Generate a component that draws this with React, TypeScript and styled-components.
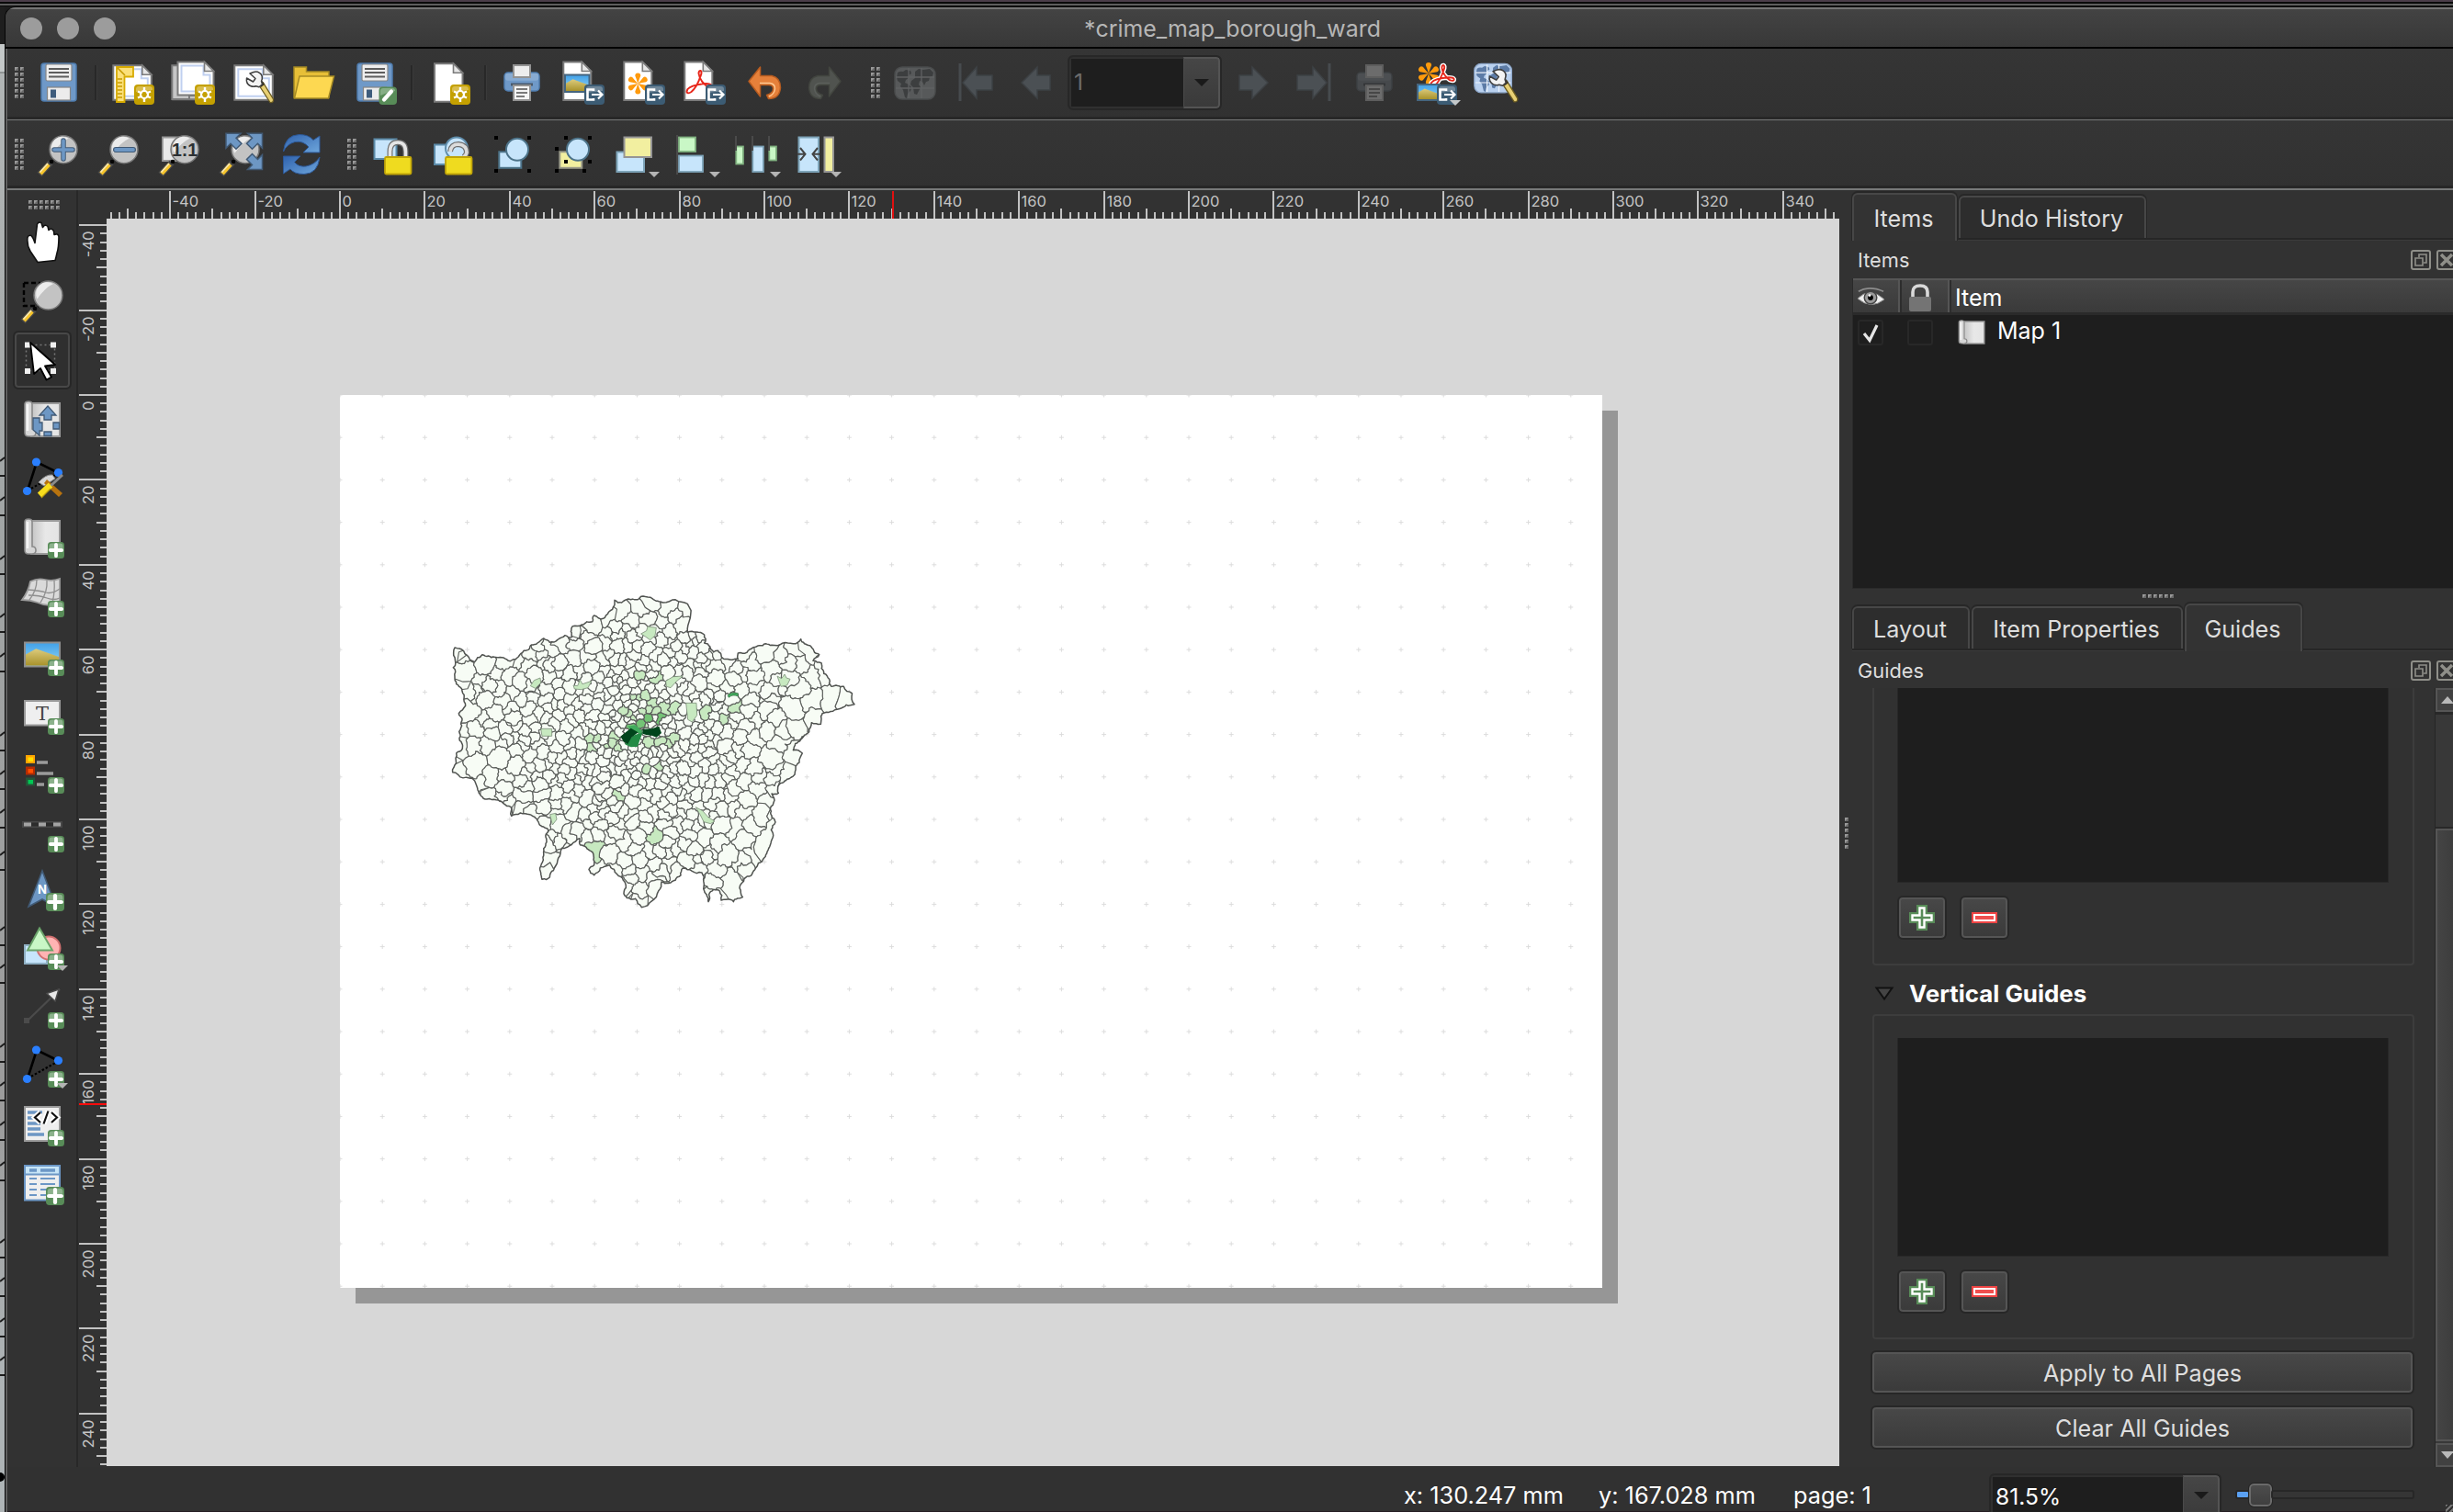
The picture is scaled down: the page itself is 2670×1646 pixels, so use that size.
import React from "react";
import styled, { createGlobalStyle } from "styled-components";

const FONT = `Inter, Roboto, "Liberation Sans", sans-serif`;

const GlobalStyle = createGlobalStyle`
  * { box-sizing: border-box; }
  html, body { margin: 0; padding: 0; background: #323232; overflow: hidden; }
  body { font-family: ${FONT}; font-size: 25px; color: #dedede; }
`;

/* ---------- shell ---------- */

const Screen = styled.div`
  width: 2670px;
  height: 1646px;
  display: flex;
  flex-direction: column;
  overflow: hidden;
  background: #1c1c1c;
`;
const MenuEdge = styled.div`
  height: 7px;
  flex: none;
  background: linear-gradient(#4a3d49 0 2px, #0a0a0a 2px 4px, #5d5d5d 4px 6px, #0a0a0a 6px 7px);
`;
const Desktop = styled.div`
  flex: 1;
  min-height: 0;
  display: flex;
`;
const BackWindow = styled.div`
  width: 5px;
  flex: none;
  background: linear-gradient(#1e1e1e 0 41px, #c4c8c8 41px 71px, #8f9393 71px 73px, #b0b4b4 73px 160px, #a2a6a6 500px, #9c9c9c 1200px, #aeb4b6 1500px);
`;
const Window = styled.div`
  flex: 1;
  min-width: 0;
  display: flex;
  flex-direction: column;
  background: #323232;
  border-left: 1px solid #050505;
  border-radius: 12px 0 0 0;
  overflow: hidden;
  border-top: 1px solid #101010;
`;
const TitleBar = styled.div`
  height: 45px;
  flex: none;
  display: grid;
  grid-template-columns: 1fr auto 1fr;
  align-items: center;
  padding: 0 9px 0 16px;
  border-top: 2px solid #757575;
  border-bottom: 2px solid #020202;
  background: linear-gradient(#434343, #383838);
`;
const Lights = styled.div`
  display: flex;
  gap: 16px;
`;
const Light = styled.span`
  width: 24px;
  height: 24px;
  border-radius: 50%;
  background: #9c9c9c;
`;
const Title = styled.h1`
  margin: 0;
  font-size: 24.9px;
  font-weight: 400;
  line-height: 36px;
  color: #b6b6b6;
  white-space: nowrap;
`;
const Frame = styled.div`
  flex: 1;
  min-height: 0;
  display: flex;
  flex-direction: column;
  border-left: 2px solid #5e5e5e;
`;
const ToolRow = styled.div<{ $line: number; $height: number; $lift?: number }>`
  height: ${(p) => p.$height}px;
  flex: none;
  display: flex;
  align-items: center;
  padding: 0 0 ${(p) => p.$lift ?? 0}px 8px;
  border-bottom: ${(p) => p.$line}px solid #777979;
  box-shadow: inset 0 -3px 0 #272727;
  background: linear-gradient(#353535, #313131);
`;

const GripBox = styled.span<{ $cols: number; $pre: number; $post: number }>`
  display: grid;
  flex: none;
  grid-template-columns: repeat(${(p) => p.$cols}, 4px);
  grid-auto-rows: 4px;
  gap: 2px;
  margin-left: ${(p) => p.$pre}px;
  margin-right: ${(p) => p.$post}px;
`;
const GripDot = styled.i`
  background: linear-gradient(135deg, #9a9a9a 45%, #6a6a6a 55%);
`;
function Grip({ cols, rows, pre = 0, post = 0 }: { cols: number; rows: number; pre?: number; post?: number }) {
  return (
    <GripBox $cols={cols} $pre={pre} $post={post}>
      {Array.from({ length: cols * rows }, (_, i) => (
        <GripDot key={i} />
      ))}
    </GripBox>
  );
}

const Tool = styled.button<{ $w?: number; $h?: number; $active?: boolean }>`
  width: ${(p) => p.$w ?? 66}px;
  height: ${(p) => p.$h ?? 66}px;
  flex: none;
  padding: 0;
  display: flex;
  align-items: center;
  justify-content: center;
  border-radius: 6px;
  border: ${(p) => (p.$active ? "2px solid #272727" : "none")};
  box-shadow: ${(p) => (p.$active ? "inset 0 0 0 2px #484848" : "none")};
  background: ${(p) => (p.$active ? "#2f2f2f" : "transparent")};
`;
const ToolSep = styled.span`
  width: 14px;
  height: 38px;
  flex: none;
  display: flex;
  justify-content: center;
  &::before {
    content: "";
    width: 3px;
    background: linear-gradient(90deg, #282828 0 2px, #3a3a3a 2px);
  }
`;
const Glyph = styled.svg`
  width: 48px;
  height: 48px;
  overflow: visible;
  display: block;
`;

/* ---------- icons ---------- */

const BLUE = "#6d97c4";
const BLUE_D = "#415a75";

const DefsSvg = styled.svg`
  position: absolute;
`;
const Defs = () => (
  <DefsSvg width="0" height="0">
    <defs>
      <linearGradient id="sky" x1="0" y1="0" x2="0" y2="1">
        <stop offset="0" stopColor="#3fa0e8" />
        <stop offset="1" stopColor="#9ad8f5" />
      </linearGradient>
      <linearGradient id="sand" x1="0" y1="0" x2="0" y2="1">
        <stop offset="0" stopColor="#dccb7c" />
        <stop offset="1" stopColor="#a8922c" />
      </linearGradient>
      <linearGradient id="roll" x1="0" y1="0" x2="1" y2="0">
        <stop offset="0" stopColor="#c4c4c4" />
        <stop offset="0.5" stopColor="#e8e8e8" />
        <stop offset="1" stopColor="#e4e4e4" />
      </linearGradient>
      <linearGradient id="sync" x1="0" y1="0" x2="1" y2="1">
        <stop offset="0" stopColor="#2f62ad" />
        <stop offset="1" stopColor="#6ea6dc" />
      </linearGradient>
    </defs>
  </DefsSvg>
);

const StarBadge = () => (
  <g>
    <rect x="26" y="26" width="22" height="22" rx="4" fill="#c4a000" />
    <path d="M28 34v-3a3 3 0 0 1 3-3h12a3 3 0 0 1 3 3v1q-8 1-18 2z" fill="#d9bd4c" />
    <path d="M37 29v5M37 40v5M30 33.500l4.500 2M39.500 38.500l4.500 2M44 33.500l-4.500 2M34.500 38.500l-4.500 2" stroke="#fff" strokeWidth="2.400" />
    <circle cx="37" cy="37" r="4" fill="none" stroke="#fff" strokeWidth="2.200" />
  </g>
);
const ExportBadge = () => (
  <g>
    <rect x="26" y="26" width="22" height="22" rx="4" fill="#3c5c74" />
    <path d="M28 35v-4a3 3 0 0 1 3-3h12a3 3 0 0 1 3 3v2q-8 1-18 2z" fill="#71889a" />
    <path d="M36 33v-1.500h-6.500v11H36V41" fill="none" stroke="#fff" strokeWidth="2.600" />
    <path d="M34 37h11M41 32.500l4.500 4.500-4.500 4.500" fill="none" stroke="#fff" strokeWidth="2.200" />
  </g>
);
const PlusBadge = ({ s = 18 }: { s?: number }) => (
  <g transform={`translate(${48 - s} ${48 - s}) scale(${s / 18})`}>
    <rect width="18" height="18" rx="3.500" fill="#588c58" />
    <path d="M1.500 9V4.500a3 3 0 0 1 3-3h9a3 3 0 0 1 3 3V7q-8 0-15 2z" fill="#8cb28c" />
    <path d="M9 2.800v12.400M2.800 9h12.400" stroke="#fff" strokeWidth="3.800" strokeLinecap="round" />
  </g>
);
const MenuArrow = () => <path d="M40 43h12l-6 6z" fill="#b4b4b4" />;

const Sheet = ({ x, y, w, h, f = 10, inner }: { x: number; y: number; w: number; h: number; f?: number; inner?: boolean }) => (
  <g>
    <path d={`M${x} ${y}h${w - f}l${f} ${f}v${h - f}h${-w}z`} fill="#fff" stroke="#7b7b7b" strokeWidth="2" />
    {inner && <path d={`M${x + 4} ${y + 4}h${w - f - 5}v${f}h${f - 3}v${h - f - 8}h${-(w - 8)}z`} fill="none" stroke="#c0d0f0" strokeWidth="2" />}
    <path d={`M${x + w - f} ${y}v${f}h${f}z`} fill="#e6e6e6" stroke="#7b7b7b" strokeWidth="1.600" />
  </g>
);

const SaveBase = () => (
  <g>
    <rect x="5" y="3" width="38" height="41" rx="3" fill="#6f99c8" stroke="#4f7cae" strokeWidth="1.500" />
    <rect x="10" y="4" width="28" height="18" rx="1.500" fill="#eeeeee" stroke="#858585" strokeWidth="1.200" />
    <path d="M13 9h22M13 13h22M13 17.500h22" stroke="#5e5e5e" strokeWidth="1.800" />
    <rect x="11.500" y="29" width="25" height="14" fill="#ececec" stroke="#858585" strokeWidth="1.200" />
    <rect x="15" y="31.500" width="6" height="9" fill="#3e5c7c" />
  </g>
);

const Wrench = () => (
  <g>
    <path d="M30 27l4.500-3L45.500 42q.5 4-3.500 3.500z" fill="#e7cf73" stroke="#6b5c22" strokeWidth="1.300" />
    <path d="M29.500 25l4-3 2.500 4-4 3z" fill="#3a3425" />
    <path d="M24 12.500l-4 1.500 6 5.500-2.500 3.500-7-4q-1 6 4 8.500 3.500 1.500 6 .3l3.500 1 3.500-3-1-3.500q2.500-6-2-9-3-2-6.500-.8z" fill="#f3f3f3" stroke="#3f3f3f" strokeWidth="1.500" strokeLinejoin="round" />
  </g>
);
const Lens = ({ cx = 29, cy = 18.7, r = 15 }: { cx?: number; cy?: number; r?: number }) => (
  <g>
    <path d="M3 46L15 33" stroke="#4a4a4a" strokeWidth="7" />
    <path d="M4 45L13 35" stroke="#f7c52c" strokeWidth="4.500" />
    <path d="M3.500 43.500L12 34" stroke="#f6e9b8" strokeWidth="1.600" />
    <circle cx="16" cy="32" r="2.300" fill="#050505" />
    <circle cx={cx} cy={cy} r={r} fill="#c3c3c3" stroke="#777" strokeWidth="1.500" />
    <path d={`M${cx - r + 3.5} ${cy + 4}a${r - 3} ${r - 3} 0 0 1 ${r + 2} -${r + 1}q-9 4-${r + 2} ${r + 1}z`} fill="#ececec" />
  </g>
);
const Picture = ({ x, y, w, h, edge }: { x: number; y: number; w: number; h: number; edge: string }) => (
  <g>
    <rect x={x} y={y} width={w} height={h} fill="url(#sky)" stroke={edge} strokeWidth="2" />
    <path d={`M${x + 1} ${y + h * 0.5}L${x + w * 0.32} ${y + h * 0.26}L${x + w - 1} ${y + h * 0.6}V${y + h - 1}H${x + 1}z`} fill="url(#sand)" />
  </g>
);
const Padlock = ({ open }: { open?: boolean }) => (
  <g>
    {open ? (
      <>
        <path d="M22 21q1-8 9-8 9 1 9 9-1 4-4 5" fill="none" stroke="#6f6f6f" strokeWidth="6" />
        <path d="M22 21q1-8 9-8 9 1 9 9-1 4-4 5" fill="none" stroke="#dcdcdc" strokeWidth="3.600" />
      </>
    ) : (
      <>
        <path d="M22.500 27v-6q0-10 8.500-10t8.500 10v6" fill="none" stroke="#6f6f6f" strokeWidth="6" />
        <path d="M22.500 27v-6q0-10 8.500-10t8.500 10v6" fill="none" stroke="#e6e6e6" strokeWidth="3.600" />
      </>
    )}
    <rect x="17" y="27" width="28.500" height="18.500" rx="1.500" fill="#efdb1f" stroke="#bfa308" strokeWidth="1.800" />
  </g>
);
const World = ({ dim }: { dim?: boolean }) => (
  <g>
    <rect x="2" y="7" width="44" height="35" rx="8" fill={dim ? "#57595a" : "#b9d0ee"} stroke={dim ? "#4a4c4d" : "#8fa9cc"} strokeWidth="1.500" />
    <path d="M5 13q3-2 6-1l3-2 5 1 1 3-3 2 1 2-4 3-1 3 4 2 3 3-1 4-3 3-1 5-2-1-2-8-3-4 1-3-4-3-1-4zM24 12l4-3 5 1 7-1 4 4-1 4-3 1-1 4-3 1-2 4-2-4-3-1-1 4 2 3-2 4-2 4-3-1-1-7-3-3 1-4 4-3z" fill={dim ? "#3c3e3f" : "#5c7ba6"} />
    <path d="M17 8v33M31 8v33M3 18h42M3 30h42" stroke={dim ? "#606263" : "#eef4fb"} strokeWidth="1.300" />
  </g>
);
const Printer = ({ dim }: { dim?: boolean }) => (
  <g>
    <rect x="5" y="13" width="38" height="20" rx="4" fill={dim ? "#46494c" : "#6f99c8"} stroke={dim ? "#3d4043" : "#4f7cae"} strokeWidth="1.500" />
    <rect x="5.800" y="13.800" width="36.400" height="8" rx="3" fill={dim ? "#4c4f52" : "#88abd2"} />
    <rect x="15" y="5" width="18" height="13" fill={dim ? "#6c6c6c" : "#ededed"} stroke={dim ? "#5d5d5d" : "#939393"} strokeWidth="2" />
    <path d="M12 26h24" stroke={dim ? "#343638" : "#4a5a6c"} strokeWidth="3" />
    <rect x="15" y="27" width="18" height="16" fill={dim ? "#6c6c6c" : "#f5f5f5"} stroke={dim ? "#5d5d5d" : "#939393"} strokeWidth="2" />
    <path d="M18 31h12M18 35h12M18 39h9" stroke={dim ? "#474747" : "#7a7a7a"} strokeWidth="1.800" />
  </g>
);
const Flower = ({ cx, cy, k = 1 }: { cx: number; cy: number; k?: number }) => (
  <g transform={`translate(${cx} ${cy}) scale(${k})`}>
    {[0, 60, 120, 180, 240, 300].map((a) => (
      <path key={a} transform={`rotate(${a})`} d="M0 0Q-1.500-5-3-8.500a3 3 0 1 1 6 0Q1.500-5 0 0z" fill="#ff9a0c" />
    ))}
  </g>
);
const ACROBAT_PATH = "M0 24q-2 0 0-4 4-5 20-6 5 0 6 2 0 3-5 1-8-6-9-14 0-3 2-3 2 1 0 6Q10 18 4 23q-3 2-4 1z";
const Acrobat = () => <path d={ACROBAT_PATH} fill="none" stroke="#e8281c" strokeWidth="2" strokeLinejoin="round" />;
const Nodes = () => (
  <g>
    <path d="M8 38L18 7 42 19" fill="none" stroke="#000" strokeWidth="2.600" />
    <path d="M8 38L42 19" stroke="#000" strokeWidth="2.200" strokeDasharray="2.500 2" />
    <circle cx="17.500" cy="7" r="4.600" fill="#2a7fff" />
    <circle cx="41.500" cy="18.500" r="4.600" fill="#2a7fff" />
    <circle cx="7.500" cy="38.500" r="4.600" fill="#2a7fff" />
  </g>
);
const Roll = () => (
  <g>
    <path d="M12 7h31v36H12z" fill="url(#roll)" stroke="#9a9a9a" strokeWidth="2" />
    <path d="M5 8q0-3 4-3t4 3v27q4 0 4 4t-4 4H9q-4 0-4-4z" fill="#d6d6d6" stroke="#8a8a8a" strokeWidth="1.600" />
    <path d="M8 8v29" stroke="#f4f4f4" strokeWidth="2.500" />
  </g>
);
const NavArrow = ({ flip, bar }: { flip?: boolean; bar?: boolean }) => (
  <g transform={flip ? "matrix(-1 0 0 1 48 0)" : undefined}>
    {bar && <path d="M7 3v41" stroke="#474b4e" strokeWidth="3" />}
    <path d={bar ? "M10 24L25 7v9h17v16H25v9z" : "M8 24L25 7v9h14v16H25v9z"} fill="#4b5054" stroke="#3d4144" strokeWidth="1.500" />
  </g>
);
const UndoShape = ({ c, d, hi }: { c: string; d: string; hi: string }) => (
  <g>
    <path d="M7 22.500L19.500 7v9.500H32q9.500 2 9.500 13-1 12-13 12l-2-4q7-2 7-7 0-4-5-4h-9V39z" fill={c} stroke={d} strokeWidth="1.500" strokeLinejoin="round" />
    <path d="M19 24.500h11q6 1 5.500 6.500-1 6-6.500 8" fill="none" stroke={hi} strokeWidth="1.400" />
  </g>
);

const icons: Record<string, React.ReactNode> = {
  save: <SaveBase />,
  newLayout: (
    <>
      <Sheet x={3.3} y={5.3} w={41.5} h={37.5} inner />
      <path d="M7 7h18v10.500H15.500V45H7z" fill="#fbe07a" stroke="#d8ab00" strokeWidth="1.800" />
      <path d="M8 8l8 8M8 20h5M8 24h5M8 28h5M8 32h5M8 36h5M8 40h5" stroke="#c79a00" strokeWidth="1.600" />
      <StarBadge />
    </>
  ),
  duplicate: (
    <>
      <path d="M1.300 5.300H20V42H1.300z M20 38h10v4.300H1.300" fill="#c6c6c6" stroke="#7b7b7b" strokeWidth="2" />
      <Sheet x={7.5} y={1.5} w={39} h={36} inner />
      <StarBadge />
    </>
  ),
  manager: (
    <>
      <Sheet x={3.3} y={5.3} w={41.5} h={37.5} inner />
      <Wrench />
    </>
  ),
  folder: (
    <>
      <path d="M2 7h13.500v5H40v28H2z" fill="#e7bf37" stroke="#a58a24" strokeWidth="1.500" />
      <path d="M8 17h37.500l-6 24H2.500z" fill="#fdd851" stroke="#a58a24" strokeWidth="1.500" />
    </>
  ),
  saveAs: (
    <>
      <SaveBase />
      <rect x="28.500" y="28.500" width="19.500" height="19.500" rx="4" fill="#588c58" />
      <path d="M30 38v-5a3 3 0 0 1 3-3h10a3 3 0 0 1 3 3q-8 1-16 5z" fill="#86ae86" />
      <path d="M34 42.500l8-9" stroke="#fff" strokeWidth="4.200" strokeLinecap="round" />
    </>
  ),
  newPage: (
    <>
      <Sheet x={9} y={3.3} w={30.5} h={41.5} />
      <StarBadge />
    </>
  ),
  print: <Printer />,
  exportImage: (
    <>
      <Sheet x={3.3} y={1.5} w={30} h={41.5} />
      <Picture x={5} y={15.5} w={26.5} h={18.5} edge="#45657f" />
      <ExportBadge />
    </>
  ),
  exportSvg: (
    <>
      <Sheet x={3.3} y={1.5} w={30} h={41.5} />
      <Flower cx={18.3} cy={25} />
      <ExportBadge />
    </>
  ),
  exportPdf: (
    <>
      <Sheet x={3.3} y={1.5} w={30} h={41.5} />
      <g transform="translate(6.500 11)">
        <Acrobat />
      </g>
      <ExportBadge />
    </>
  ),
  undo: <UndoShape c="#e5803a" d="#b85c20" hi="#ffc993" />,
  redo: (
    <g transform="matrix(-1 0 0 1 48 0)">
      <UndoShape c="#50534f" d="#42453f" hi="#5b5f5b" />
    </g>
  ),
  atlas: <World dim />,
  first: <NavArrow bar />,
  prev: <NavArrow />,
  next: <NavArrow flip />,
  last: <NavArrow flip bar />,
  printDim: <Printer dim />,
  exportAtlas: (
    <>
      <Flower cx={17} cy={14} k={1.05} />
      <g transform="translate(20 5) scale(.95)">
        <path d={ACROBAT_PATH} fill="none" stroke="#fff" strokeWidth="5" />
        <Acrobat />
      </g>
      <Picture x={5} y={26} w={24} h={17} edge="#45657f" />
      <ExportBadge />
      <path d="M40 43h12l-6 6z" fill="#c4c8ca" />
    </>
  ),
  atlasSettings: (
    <>
      <g transform="translate(-1 -3) scale(.92 .9)">
        <World />
      </g>
      <g transform="translate(0 -3) scale(1.050)">
        <Wrench />
      </g>
    </>
  ),
  zoomIn: (
    <>
      <Lens />
      <path d="M29 9v20M19 19h20" stroke={BLUE_D} strokeWidth="5.500" strokeLinecap="round" />
      <path d="M29 9v20M19 19h20" stroke={BLUE} strokeWidth="3.600" strokeLinecap="round" />
    </>
  ),
  zoomOut: (
    <>
      <Lens />
      <path d="M20 19h19" stroke={BLUE_D} strokeWidth="6" strokeLinecap="round" />
      <path d="M20 19h19" stroke={BLUE} strokeWidth="3.800" strokeLinecap="round" />
    </>
  ),
  zoomActual: (
    <>
      <path d="M5 5.500h20v25.500H5z" fill="#e9e9e9" stroke="#9a9a9a" strokeWidth="1.800" />
      <Lens />
      <text x="29" y="26" textAnchor="middle" fontFamily="Liberation Sans, sans-serif" fontWeight="700" fontSize="19.500" fill="#2b2f33">
        1:1
      </text>
    </>
  ),
  zoomFull: (
    <>
      <Lens />
      <g fill={BLUE} stroke={BLUE_D} strokeWidth="1.500">
        <path d="M8 1.300h16l-5 5 6 6-6 6-6-6-5 5z" />
        <path d="M47.500 1.300h-16l5 5-6 6 6 6 6-6 5 5z" />
        <path d="M47.500 40.500h-16l5-5-6-6 6-6 6 6 5-5z" />
      </g>
    </>
  ),
  refresh: (
    <g fill="url(#sync)" stroke="#2c5796" strokeWidth="1">
      <path d="M4.500 21Q6 3 22 2.500q10 0 15 6l7-4.500v18H26l6-6Q26 9 17 10.500 8 13 4.500 21z" />
      <path d="M44 27Q42 45 27 45.500q-11 0-15-5.500l-7.500 5V26H23l-6.500 6.500Q21 38 29 37q10-2 15-10z" />
    </g>
  ),
  lock: (
    <>
      <rect x="5.500" y="7.500" width="24" height="21.500" fill="#c7e5fb" stroke="#5b8aa8" strokeWidth="2" />
      <Padlock />
    </>
  ),
  unlock: (
    <>
      <rect x="5" y="13.500" width="22" height="21.500" fill="#c7e5fb" stroke="#5b8aa8" strokeWidth="2" />
      <circle cx="29" cy="17.500" r="12" fill="#c7e5fb" stroke="#5f8dab" strokeWidth="2" />
      <Padlock open />
    </>
  ),
  group: (
    <>
      <rect x="9.300" y="21.300" width="24" height="17.500" fill="#c7e5fb" stroke="#4d7389" strokeWidth="2" />
      <circle cx="29" cy="18.800" r="12" fill="#c7e5fb" stroke="#4d7389" strokeWidth="2" />
      <path d="M4 4h4v4H4zM40 4h4v4h-4zM4 40h4v4H4zM40 40h4v4h-4z" />
    </>
  ),
  ungroup: (
    <>
      <rect x="9.300" y="21.300" width="24" height="17.500" fill="#f2efa0" stroke="#9a9a88" strokeWidth="2" />
      <circle cx="29" cy="18.800" r="12" fill="#c7e5fb" stroke="#4d7389" strokeWidth="2" />
      <path d="M14 4h4v4h-4zM40 4h4v4h-4zM4 16h4v4H4zM14 30h4v4h-4zM40 30h4v4h-4zM4 40h4v4H4zM34 40h4v4h-4z" />
    </>
  ),
  raise: (
    <>
      <rect x="5.500" y="21.500" width="29.500" height="21.500" fill="#c7e5fb" stroke="#7da3b8" strokeWidth="2" />
      <rect x="13.500" y="5.500" width="29.500" height="21.500" fill="#f2efa0" stroke="#959595" strokeWidth="2" />
      <MenuArrow />
    </>
  ),
  align: (
    <>
      <path d="M5 3v43" stroke="#4a4a4a" strokeWidth="2" />
      <rect x="7" y="5.500" width="18" height="15.500" fill="#c9f7c6" stroke="#82b482" strokeWidth="1.800" />
      <rect x="7" y="25.500" width="26" height="17.500" fill="#c7e5fb" stroke="#7da3b8" strokeWidth="1.800" />
      <MenuArrow />
    </>
  ),
  distribute: (
    <>
      <path d="M3 4v17M21 4v17M39 4v17" stroke="#4a4a4a" strokeWidth="2" />
      <rect x="3.300" y="15.500" width="7.600" height="19" fill="#c9f7c6" stroke="#82b482" strokeWidth="1.800" />
      <rect x="21.300" y="15.500" width="11.600" height="27.500" fill="#c7e5fb" stroke="#7da3b8" strokeWidth="1.800" />
      <rect x="39.300" y="15.500" width="7.600" height="15" fill="#c9f7c6" stroke="#82b482" strokeWidth="1.800" />
      <path d="M3 14v6M21 14v6M39 14v6" stroke="#4a4a4a" strokeWidth="2" />
      <MenuArrow />
    </>
  ),
  resize: (
    <>
      <rect x="5.500" y="5.500" width="21.500" height="37.500" fill="#c7e5fb" stroke="#7da3b8" strokeWidth="2" />
      <rect x="33.500" y="5.500" width="9.500" height="37.500" fill="#f2efa0" stroke="#959595" strokeWidth="2" />
      <path d="M4 23.800h8M7 17l5.500 6.800L7 30.500M28 23.800h-8M26 17l-5.500 6.800L26 30.500" fill="none" stroke="#444" strokeWidth="2" />
      <MenuArrow />
    </>
  ),
  pan: (
    <path
      d="M17 45L9 33Q5 26 6 18q1-3 4-2 2 2 4 8L16.500 3.500Q18 .5 21 2l1.500 5Q25 3 28 6l1 4q3-3 5.500 1l.5 4q4-2 5 2 0 12-2 18-1 5-2 8z"
      transform="translate(2 .5)"
      fill="#fff"
      stroke="#111"
      strokeWidth="1.600"
      strokeLinejoin="round"
    />
  ),
  zoom: (
    <>
      <path d="M4 4h18M4 4v25h22" fill="none" stroke="#000" strokeWidth="2.400" strokeDasharray="5 3" />
      <Lens cx={30.5} cy={17.5} r={15.5} />
    </>
  ),
  select: (
    <>
      <path d="M6.500 7.500h31v28h-31z" fill="none" stroke="#777" strokeWidth="1.500" strokeDasharray="2 3" />
      <path d="M5 4.500h6v6H5zM33 4.500h6v6h-6zM5 33h6v6H5zM33 33h6v6h-6z" fill="#efefef" />
      <path d="M11 5l27 24-11 1.500 7 12-5.500 3L22 33l-7 6z" fill="#fff" stroke="#000" strokeWidth="1.800" strokeLinejoin="round" />
    </>
  ),
  moveContent: (
    <>
      <Roll />
      <g fill={BLUE} stroke={BLUE_D} strokeWidth="1.300">
        <path d="M30 10l9 10h-5v5h-8v-5h-5z" />
        <path d="M14 23l7 0v5h3v9h-3v5l-7-6z" />
        <path d="M36 28h6.500v7H36zM26 38h8v4.500h-8z" />
      </g>
    </>
  ),
  editNodes: (
    <>
      <Nodes />
      <path d="M20 29q8-9 15-8l3 4-12 8z" fill="#d6d6d6" stroke="#8d8d8d" />
      <path d="M29 26l17 15-4 4-16-15z" fill="#b8730f" />
      <path d="M46 21L33 33" stroke="#8a8a8a" strokeWidth="3" />
      <path d="M33 32L21 43" stroke="#f7dd1d" strokeWidth="6.500" />
      <path d="M33 36L23 46" stroke="#b59a10" strokeWidth="1.200" />
    </>
  ),
  addMap: (
    <>
      <Roll />
      <PlusBadge />
    </>
  ),
  add3d: (
    <>
      <path d="M2 29Q9 20 11 9q8-4 16-2 8 2 16-1v27q-14 4-24-1-8-3-17-3z" fill="#dadada" stroke="#9c9c9c" strokeWidth="1.800" />
      <path d="M8 18q14 1 20 3t15-4M18 7q0 12-8 22M29 8q1 12-7 24M9 24q12 0 20 3t14 0M37 8q1 12-2 24" fill="none" stroke="#8f8f8f" strokeWidth="1.300" />
      <PlusBadge />
    </>
  ),
  addPicture: (
    <>
      <Picture x={5} y={11.5} w={38} h={26} edge="#8e8e8e" />
      <PlusBadge />
    </>
  ),
  addLabel: (
    <>
      <rect x="5" y="11" width="38" height="26.500" fill="#efefef" stroke="#9a9a9a" strokeWidth="2" />
      <text x="24" y="31.500" textAnchor="middle" fontFamily="DejaVu Serif, Liberation Serif, serif" fontSize="21" fill="#444">
        T
      </text>
      <PlusBadge />
    </>
  ),
  addLegend: (
    <>
      <path d="M6 6h10v9H6z" fill="#ffa500" />
      <path d="M8.500 8.500h5.500v4.500H8.500z" fill="#ffdf00" />
      <path d="M6 18.500h10v9H6z" fill="#b32b00" />
      <path d="M8.500 21h5.500v4.500H8.500z" fill="#ff4e00" />
      <path d="M6 30.500h10v9H6z" fill="#245438" />
      <path d="M8.500 33h5.500v4.500H8.500z" fill="#00c853" />
      <path d="M18 14h12M18 26h18M18 38h8" stroke="#9b9b9b" strokeWidth="3.600" />
      <PlusBadge />
    </>
  ),
  addScale: (
    <>
      <path d="M2 14h44v7H2z" fill="#474747" />
      <path d="M4 17.500h8M20 17.500h8M36 17.500h8" stroke="#a3a3a3" strokeWidth="4" />
      <path d="M12 17.500h8M28 17.500h8" stroke="#2c2c2c" strokeWidth="4" />
      <PlusBadge />
    </>
  ),
  addNorth: (
    <>
      <path d="M24 4l15 39-15-8-15 8z" fill={BLUE} stroke={BLUE_D} strokeWidth="1.600" />
      <text x="24" y="29" textAnchor="middle" fontFamily="Inter, sans-serif" fontWeight="700" fontSize="13" fill="#fff">
        N
      </text>
      <PlusBadge s={20} />
    </>
  ),
  addShape: (
    <>
      <rect x="5" y="21" width="24" height="20" fill="#c7e5fb" stroke="#8fb0c4" strokeWidth="2" />
      <circle cx="31" cy="24" r="12.500" fill="#ffb3b3" stroke="#d07070" strokeWidth="2" />
      <path d="M21 2.500L35 26.500H8z" fill="#c9f7c6" stroke="#6aa36a" strokeWidth="2" />
      <PlusBadge />
      <MenuArrow />
    </>
  ),
  addArrow: (
    <>
      <path d="M8 39L43 5" stroke="#4b4b4b" strokeWidth="2.200" />
      <path d="M4 36h6v6H4z" fill="#4b4b4b" />
      <path d="M42 5l-4 13-9-8.500z" fill="#e9e9e9" stroke="#4b4b4b" strokeWidth="1.500" />
      <PlusBadge />
    </>
  ),
  addNode: (
    <>
      <Nodes />
      <PlusBadge />
      <MenuArrow />
    </>
  ),
  addHtml: (
    <>
      <rect x="5" y="5" width="38" height="37" fill="#efefef" stroke="#9a9a9a" strokeWidth="2" />
      <path d="M8 11h16M8 17h9M8 23h14M8 29h14M8 35h18" stroke={BLUE} strokeWidth="3.400" />
      <path d="M22 11l-6 5.500 6 5.500M34 11l6 5.500-6 5.500M30.500 9.500l-5 14" fill="none" stroke="#fff" strokeWidth="6" />
      <path d="M22 11l-6 5.500 6 5.500M34 11l6 5.500-6 5.500M30.500 9.500l-5 14" fill="none" stroke="#111" strokeWidth="2.200" />
      <PlusBadge />
    </>
  ),
  addTable: (
    <>
      <rect x="5" y="5" width="38" height="37.500" fill="#efefef" stroke="#6c97c6" strokeWidth="2" />
      <path d="M6 6h36v8H6z" fill="#c7e5f7" />
      <path d="M5 14.500h38" stroke="#6c97c6" strokeWidth="2" />
      <path d="M10 10h8M22 10h16" stroke="#6c97c6" strokeWidth="3.600" />
      <path d="M10 19h8M22 19h16M10 25h8M22 25h16M10 31h8M22 31h16M10 37h8M22 37h8" stroke="#6c97c6" strokeWidth="2.200" />
      <PlusBadge s={20} />
    </>
  ),
};

function ToolIcon({ name, w, h, active }: { name: string; w?: number; h?: number; active?: boolean }) {
  return (
    <Tool $w={w} $h={h} $active={active} aria-label={name}>
      <Glyph viewBox="0 0 48 48">{icons[name]}</Glyph>
    </Tool>
  );
}

/* ---------- combo boxes ---------- */

const Combo = styled.div<{ $w: number; $h: number; $dim?: boolean }>`
  width: ${(p) => p.$w}px;
  height: ${(p) => p.$h}px;
  margin: 0 1px;
  flex: none;
  display: flex;
  border: 2px solid #272727;
  border-radius: 6px;
  overflow: hidden;
  background: #1e1e1e;
  color: ${(p) => (p.$dim ? "#6c6c6c" : "#ffffff")};
  font-size: 24.6px;
`;
const ComboValue = styled.span<{ $top: number }>`
  flex: 1;
  padding: ${(p) => p.$top}px 0 0 3px;
  border: 2px solid #303030;
  border-right: none;
  line-height: 30px;
`;
const ComboArrow = styled.span<{ $top: number }>`
  width: 40px;
  display: flex;
  justify-content: center;
  padding-top: ${(p) => p.$top}px;
  background: linear-gradient(#464646, #3a3a3a);
  border: 2px solid #545454;
  border-left: 1px solid #4a4a4a;
  border-radius: 0 4px 4px 0;
  &::before {
    content: "";
    width: 0;
    height: 0;
    border: 8px solid transparent;
    border-top-color: #1a1a1a;
    border-bottom: none;
  }
`;

/* ---------- work area ---------- */

const Body = styled.div`
  flex: none;
  height: 1390px;
  display: flex;
`;
const Palette = styled.div`
  width: 77px;
  flex: none;
  display: flex;
  flex-direction: column;
  align-items: center;
  padding: 11px 0 0 1px;
  border-right: 2px solid #282828;
`;
const PaletteHead = styled.div`
  height: 14px;
  flex: none;
  padding-left: 4px;
`;
const Work = styled.div`
  width: 1917px;
  flex: none;
  display: grid;
  grid-template: 31px 1fr / 31px 1fr;
`;
const RulerSvg = styled.svg`
  display: block;
  font-family: ${FONT};
  font-size: 16.5px;
  fill: #c4c4c4;
`;
const Canvas = styled.div`
  position: relative;
  overflow: hidden;
  height: 1358px;
  background: #d7d7d7;
`;
const Page = styled.div`
  position: absolute;
  left: 254px;
  top: 192px;
  width: 1374px;
  height: 972px;
  background: #fff;
  box-shadow: 17px 17px 0 #969696;
`;
const MapItem = styled.svg`
  position: absolute;
  left: 100px;
  top: 200px;
  width: 480px;
  height: 380px;
`;
const GridSvg = styled.svg`
  display: block;
  width: 100%;
  height: 100%;
`;

const MM = 4.62;

function HorizontalRuler() {
  const items: React.ReactNode[] = [];
  for (let v = -54; v <= 352; v += 2) {
    const x = Math.round(253 + v * MM);
    const major = v % 20 === 0;
    items.push(<rect key={v} x={x} y={major ? 1 : v % 10 === 0 ? 20 : 24} width={2} height={31} fill="#c2c2c2" />);
    if (major)
      items.push(
        <text key={`t${v}`} x={x + 3.5} y={17.5}>
          {v}
        </text>,
      );
  }
  return (
    <RulerSvg width={1886} height={31}>
      {items}
      <rect x={855} y={1} width={2} height={30} fill="#e01010" />
    </RulerSvg>
  );
}
function VerticalRuler() {
  const items: React.ReactNode[] = [];
  for (let v = -40; v <= 252; v += 2) {
    const y = Math.round(191 + v * MM);
    const major = v % 20 === 0;
    const x = major ? 1 : v % 10 === 0 ? 20 : 24;
    items.push(<rect key={v} x={x} y={y} width={31 - x} height={2} fill="#c2c2c2" />);
    if (major)
      items.push(
        <text key={`t${v}`} transform={`translate(17 ${y + 7.5}) rotate(-90)`} textAnchor="end">
          {v}
        </text>,
      );
  }
  return (
    <RulerSvg width={31} height={1358}>
      {items}
      <rect x={1} y={963} width={30} height={2} fill="#ff0c0c" />
    </RulerSvg>
  );
}

/* ---------- ward map ---------- */

type P = [number, number];
const OUTLINE: P[] = (
  "75,225 90,228 115,250 140,272 165,248 205,256 250,268 290,245 315,232 345,210 365,195 385,208 410,200 435,185 458,190 460,155 490,150 525,140 530,120 560,130 590,100 597,70 620,78 650,68 690,57 720,65 755,78 835,82 835,175 890,183 890,210 920,240 935,235 945,250 975,265 1000,262 1000,243 1030,240 1070,218 1110,217 1180,212 1205,197 1235,218 1265,248 1245,268 1272,275 1280,310 1305,352 1345,352 1380,410 1330,425 1275,440 1270,475 1240,470 1232,500 1205,525 1180,560 1210,570 1200,600 1185,640 1160,655 1130,680 1132,700 1110,702 1108,760 1122,795 1108,820 1105,870 1085,912 1055,950 1020,980 1005,1010 1015,1040 985,1055 945,1050 940,1020 920,1015 903,1055 890,1020 882,960 850,955 820,945 795,985 750,990 740,1020 685,1073 665,1045 630,1035 625,985 605,965 580,935 550,945 530,968 513,950 530,935 520,890 485,870 483,848 425,880 400,945 385,975 360,982 355,940 365,905 375,860 380,820 350,800 320,770 260,775 258,745 210,722 180,720 150,690 140,660 68,632 80,570 100,555 90,520 98,480 88,440 110,415 98,360 75,320 70,290"
).split(" ").map((s) => s.split(",").map(Number) as P);

function inside(x: number, y: number, poly: P[]) {
  let c = false;
  for (let i = 0, j = poly.length - 1; i < poly.length; j = i++) {
    const [xi, yi] = poly[i];
    const [xj, yj] = poly[j];
    if (yi > y !== yj > y && x < ((xj - xi) * (y - yi)) / (yj - yi) + xi) c = !c;
  }
  return c;
}
function noise(x: number, y: number) {
  const s = Math.sin(x * 12.9898 + y * 78.233) * 43758.5453;
  return s - Math.floor(s) - 0.5;
}
// Offsets the middle of an edge by a hash of its end points, so that two wards share one wiggly border.
function wiggle(a: P, b: P, depth: number, amp: number): P[] {
  const d = Math.hypot(a[0] - b[0], a[1] - b[1]);
  if (depth === 0 || d < 9) return [a];
  const [p, q] = a[0] < b[0] || (a[0] === b[0] && a[1] < b[1]) ? [a, b] : [b, a];
  const n = noise(Math.round(p[0] + q[0]), Math.round(p[1] + q[1])) * amp;
  const m: P = [(p[0] + q[0]) / 2 - (q[1] - p[1]) * n, (p[1] + q[1]) / 2 + (q[0] - p[0]) * n];
  return [...wiggle(a, m, depth - 1, amp), ...wiggle(m, b, depth - 1, amp)];
}
const toPath = (pts: P[], amp: number) =>
  "M" +
  pts
    .flatMap((p, i) => wiggle(p, pts[(i + 1) % pts.length], 3, amp))
    .map((p) => `${p[0].toFixed(1)} ${p[1].toFixed(1)}`)
    .join("L") +
  "z";

function buildWards() {
  let seed = 20177;
  const rnd = () => {
    seed = (seed * 1103515245 + 12345) % 2147483648;
    return seed / 2147483648;
  };
  const radius = (x: number, y: number) => {
    const d = Math.hypot((x - 670) * 0.85, y - 500);
    return 14.5 + Math.max(0, d - 90) * 0.05 + (x > 1000 ? 8 : 0);
  };
  const sites: [number, number, number][] = [
    [145, 610, 66], [975, 985, 60], [105, 300, 48], [1300, 395, 54], [685, 95, 42], [1080, 770, 44], [1190, 480, 44],
    [505, 250, 38], [405, 700, 36], [385, 920, 40], [1135, 245, 38], [325, 575, 32], [510, 720, 32], [885, 850, 38],
    [180, 280, 34], [1060, 465, 34], [985, 745, 34], [848, 432, 24],
  ];
  const pinned = sites.length;
  for (let i = 0; i < 34000; i++) {
    const x = 60 + rnd() * 1330;
    const y = 50 + rnd() * 1030;
    if (!inside(x, y, OUTLINE)) continue;
    const r = radius(x, y) * (0.55 + rnd() * 0.85);
    // Each neighbourhood leans one way, which stretches its wards into uneven slivers.
    const lean = Math.sin(x / 61) + Math.cos(y / 47);
    const sx = lean > 0 ? 1.3 : 0.8;
    const sy = lean > 0 ? 0.8 : 1.3;
    if (sites.every((s, k) => (k < pinned ? Math.hypot(s[0] - x, s[1] - y) > s[2] : Math.hypot((s[0] - x) * sx, (s[1] - y) * sy) > Math.max(r, s[2] * 0.95))))
      sites.push([x, y, r]);
  }
  return sites.map(([x, y]) => {
    let poly: P[] = [[x - 160, y - 160], [x + 160, y - 160], [x + 160, y + 160], [x - 160, y + 160]];
    for (const [u, v] of sites) {
      if ((u === x && v === y) || Math.abs(u - x) > 320 || Math.abs(v - y) > 320) continue;
      const mx = (x + u) / 2;
      const my = (y + v) / 2;
      const side = (p: P) => (p[0] - mx) * (u - x) + (p[1] - my) * (v - y);
      const out: P[] = [];
      poly.forEach((p, i) => {
        const q = poly[(i + 1) % poly.length];
        const sp = side(p);
        const sq = side(q);
        if (sp <= 0) out.push(p);
        if (sp < 0 !== sq < 0 && sp !== 0 && sq !== 0) {
          const t = sp / (sp - sq);
          out.push([p[0] + (q[0] - p[0]) * t, p[1] + (q[1] - p[1]) * t]);
        }
      });
      poly = out;
    }
    return { x, y, d: toPath(poly.map(([a, b]) => [Math.round(a), Math.round(b)] as P), 0.62) };
  });
}

const LIGHT_SPOTS: P[] = [
  [690, 305], [742, 322], [505, 525], [550, 515], [590, 520], [605, 535], [610, 560], [648, 380], [683, 385], [640, 440],
  [665, 460], [700, 420], [720, 440], [750, 430], [750, 460], [780, 440], [720, 400], [700, 460], [720, 540], [700, 530],
  [740, 545], [780, 540], [800, 530], [690, 628], [755, 615], [612, 725], [713, 852], [570, 878], [905, 430], [940, 448],
  [978, 430], [505, 562], [580, 545], [620, 440], [690, 395], [735, 415], [765, 415], [650, 450], [680, 440], [695, 480],
];
const MID_SPOTS: P[] = [[655, 480], [735, 465], [712, 452], [675, 470]];

const wards = buildWards();
const wardFill = new Map<number, string>();
const paint = (spots: P[], color: string) =>
  spots.forEach(([x, y]) => {
    let best = 0;
    wards.forEach((w, i) => {
      if (Math.hypot(w.x - x, w.y - y) < Math.hypot(wards[best].x - x, wards[best].y - y)) best = i;
    });
    wardFill.set(best, color);
  });
paint(LIGHT_SPOTS, "#c7e9c0");
paint(MID_SPOTS, "#74c476");
const outlinePath = toPath(OUTLINE, 0.35);

function WardMap() {
  return (
    <MapItem viewBox="0 0 1440 1140">
      <clipPath id="london">
        <path d={outlinePath} />
      </clipPath>
      <g clipPath="url(#london)" stroke="#5c5f5c" strokeWidth={3.4} strokeLinejoin="round">
        <rect width="1440" height="1140" fill="#f7fcf5" stroke="none" />
        {wards.map((w, i) => (
          <path key={i} d={w.d} fill={wardFill.get(i) ?? "#f7fcf5"} />
        ))}
      </g>
      <g fill="#c7e9c0" stroke="#7f917d" strokeWidth={2.5} strokeLinejoin="round">
        <path d="M683 180l18-10 4-14 28 4-4 26-16 14-14-10z" />
        <path d="M322 350l12-18 20-8 2 16-18 18z" />
        <path d="M462 348l14 2 8-20 8 14 30-10-12 22-22 6-22-2z" />
        <path d="M764 334l24-14 32-2-22 18-18 20-14-4z" />
        <path d="M830 406h34l2 40-16 22-14-8z" />
        <path d="M1128 318l14 8 10-14 6 12 12 4-10 20-20 4z" />
        <path d="M356 490h36v24h-32z" />
        <path d="M862 746l22 12 20 22 20 12-14 8-22-6-10-20z" />
        <path d="M386 770l18-4 4 20-14 18z" />
      </g>
      <path d={outlinePath} fill="none" stroke="#505350" strokeWidth={4.5} strokeLinejoin="round" />
      <path d="M630 540l28-28 32-12-10 24-8 24-22 2z" fill="#238b45" />
      <path d="M640 482l24-4 24 20-8 8-28-10z" fill="#41ab5d" />
      <path d="M616 515l34-27 24 14-22 16-12 22-14-8z" fill="#00441b" />
      <path d="M688 492l30-2 24-8 8 22-16 14-16-6-18-2-12-4z" fill="#00441b" />
      <path d="M966 382q10-14 34-8v10q-18-8-30 4z" fill="#41ab5d" stroke="#3b6b45" strokeWidth={2} />
    </MapItem>
  );
}

/* ---------- right docks ---------- */

const Splitter = styled.div`
  width: 14px;
  flex: none;
  display: flex;
  align-items: center;
  justify-content: center;
  padding: 10px 0 0 1px;
`;
const Docks = styled.div`
  flex: 1;
  min-width: 0;
  display: flex;
  flex-direction: column;
`;
const TabBar = styled.div<{ $h: number }>`
  height: ${(p) => p.$h}px;
  flex: none;
  display: flex;
  align-items: flex-end;
  gap: 2px;
  background: linear-gradient(#3b3b3b, #3b3b3b) 0 100% / 100% 1px no-repeat, linear-gradient(#262626, #262626) 0 calc(100% - 1px) / 100% 2px no-repeat;
`;
const Tab = styled.button<{ $w: number; $on?: boolean }>`
  width: ${(p) => p.$w}px;
  height: ${(p) => (p.$on ? 52 : 46)}px;
  margin-bottom: ${(p) => (p.$on ? 0 : 3)}px;
  padding: 1px 2px 0 0;
  font: 400 25.2px ${FONT};
  color: #dedede;
  white-space: nowrap;
  border: 2px solid #474747;
  border-bottom: none;
  border-radius: 6px 6px 0 0;
  box-shadow: 0 -1px 0 1px #272727;
  clip-path: inset(-4px -2px 0 -2px);
  background: ${(p) => (p.$on ? "#333333" : "#2d2d2d")};
`;
const DockTitle = styled.div<{ $h: number }>`
  height: ${(p) => p.$h}px;
  flex: none;
  display: flex;
  align-items: center;
  padding: 1px 0 0 6px;
  font-size: 21.8px;
  white-space: nowrap;
`;
const DockButtons = styled.span`
  width: 46px;
  margin-left: auto;
  display: flex;
  gap: 6px;
  overflow: hidden;
`;
const DockGlyph = styled.svg`
  width: 22px;
  height: 22px;
  flex: none;
  fill: none;
  stroke: #8f8f89;
  stroke-width: 2;
`;
function DockControls() {
  return (
    <DockButtons>
      <DockGlyph viewBox="0 0 22 22">
        <rect x="1" y="1" width="20" height="20" rx="2" />
        <path d="M9 8V5h8v9h-3M5 9h8v8H5z" strokeWidth="1.600" />
      </DockGlyph>
      <DockGlyph viewBox="0 0 22 22">
        <rect x="1" y="1" width="20" height="20" rx="2" />
        <path d="M5 5l12 12M17 5L5 17" strokeWidth="3.500" />
      </DockGlyph>
    </DockButtons>
  );
}
const Tree = styled.div`
  height: 338px;
  flex: none;
  display: flex;
  flex-direction: column;
  background: #1e1e1e;
  border-left: 1px solid #2a2a2a;
  border-bottom: 1px solid #2a2a2a;
`;
const TreeRow = styled.div<{ $head?: boolean }>`
  height: ${(p) => (p.$head ? 40 : 34)}px;
  display: grid;
  grid-template-columns: 51px 54px 1fr;
  align-items: center;
  color: #fff;
  background: ${(p) => (p.$head ? "linear-gradient(#464646, #3a3a3a)" : "none")};
  border-top: ${(p) => (p.$head ? "2px solid #565656" : "none")};
  border-bottom: ${(p) => (p.$head ? "3px solid #2a2a2a" : "none")};
`;
const HeadCell = styled.span<{ $pad: number; $last?: boolean }>`
  height: 100%;
  display: flex;
  align-items: center;
  padding-left: ${(p) => p.$pad}px;
  padding-top: 2px;
  border-right: ${(p) => (p.$last ? "none" : "2px solid #555")};
  box-shadow: ${(p) => (p.$last ? "none" : "2px 0 0 #2d2d2d")};
`;
const BodyCell = styled.span<{ $pad: number }>`
  display: flex;
  align-items: center;
  gap: 12px;
  padding-left: ${(p) => p.$pad}px;
`;
const Check = styled.span`
  width: 28px;
  height: 28px;
  margin-top: 4px;
  border: 2px solid #282828;
  border-radius: 3px;
  display: flex;
  align-items: center;
  justify-content: center;
`;
const SmallSvg = styled.svg`
  display: block;
  overflow: visible;
`;
const HandleRow = styled.div`
  height: 17px;
  flex: none;
  display: flex;
  justify-content: center;
  padding: 6px 0 0 12px;
`;
const ScrollArea = styled.div`
  flex: 1;
  min-height: 0;
  display: flex;
  overflow: hidden;
`;
const ScrollContent = styled.div`
  width: 634px;
  flex: none;
  padding: 0 22px 0 20px;
  display: flex;
  flex-direction: column;
`;
const Group = styled.div<{ $cut?: boolean }>`
  height: ${(p) => (p.$cut ? 302 : 354)}px;
  flex: none;
  margin: 0 0 ${(p) => (p.$cut ? 0 : 12)}px 2px;
  padding: ${(p) => (p.$cut ? 0 : 24)}px 26px 0 25px;
  border: 2px solid #3d3d3d;
  border-top-width: ${(p) => (p.$cut ? 0 : 2)}px;
  border-radius: ${(p) => (p.$cut ? "0 0 4px 4px" : "4px")};
  background: #313131;
`;
const GuideList = styled.div<{ $h: number }>`
  height: ${(p) => p.$h}px;
  background: #1e1e1e;
  border: 1px solid #282828;
  border-top: none;
`;
const ButtonPair = styled.div`
  display: flex;
  gap: 14px;
  margin-top: 14px;
`;
const raised = `
  border: 2px solid #272727;
  border-radius: 6px;
  box-shadow: inset 0 0 0 2px #555555;
  background: linear-gradient(#484848, #3a3a3a);
`;
const SquareButton = styled.button`
  width: 54px;
  height: 48px;
  padding: 0;
  display: flex;
  align-items: center;
  justify-content: center;
  ${raised}
`;
const WideButton = styled.button`
  height: 48px;
  flex: none;
  margin-bottom: 12px;
  padding: 2px 0 0;
  font: 400 25.2px ${FONT};
  color: #dedede;
  ${raised}
`;
const GroupHeading = styled.h2`
  height: 53px;
  flex: none;
  margin: 0;
  padding: 8px 0 0 5px;
  display: flex;
  align-items: center;
  gap: 17px;
  font-size: 25.9px;
  font-weight: 700;
  color: #fff;
`;
const ScrollBar = styled.div`
  flex: 1;
  display: flex;
  flex-direction: column;
  overflow: hidden;
  background: #383838;
  border-left: 1px solid #262626;
`;
const ScrollButton = styled.div<{ $down?: boolean }>`
  height: 26px;
  flex: none;
  width: 30px;
  display: flex;
  align-items: center;
  padding-left: 4px;
  border: 2px solid #555;
  background: #414141;
  &::before {
    content: "";
    border: 7px solid transparent;
    border-top: ${(p) => (p.$down ? "8px solid #b8b8b8" : "none")};
    border-bottom: ${(p) => (p.$down ? "none" : "8px solid #b8b8b8")};
  }
`;
const ScrollTrack = styled.div`
  height: 127px;
  flex: none;
  border-top: 3px solid #282828;
  border-bottom: 2px solid #282828;
`;
const ScrollThumb = styled.div`
  flex: 1;
  width: 30px;
  border: 2px solid #555;
  margin-bottom: 2px;
  background: linear-gradient(90deg, #444, #3a3a3a);
`;

function AddRemove() {
  return (
    <ButtonPair>
      <SquareButton aria-label="add">
        <SmallSvg width="28" height="28" viewBox="0 0 28 28">
          <path d="M8 0h12v8h8v12h-8v8H8v-8H0V8h8z" fill="#588c58" />
          <path d="M11.500 3.500h5v8h8v5h-8v8h-5v-8h-8v-5h8z" fill="#588c58" stroke="#fff" strokeWidth="2.400" />
        </SmallSvg>
      </SquareButton>
      <SquareButton aria-label="remove">
        <SmallSvg width="28" height="12" viewBox="0 0 28 12">
          <rect width="28" height="12" fill="#ef4444" />
          <rect x="3" y="3" width="22" height="6" fill="#ef4f4f" stroke="#fff" strokeWidth="2" />
        </SmallSvg>
      </SquareButton>
    </ButtonPair>
  );
}

/* ---------- status bar ---------- */

const Status = styled.div`
  flex: 1;
  min-height: 0;
  display: flex;
  align-items: flex-start;
  padding: 7px 0 0 1520px;
  color: #fff;
  background: #313131;
  border-bottom: 1px solid #241c22;
`;
const StatusText = styled.span<{ $w: number }>`
  width: ${(p) => p.$w}px;
  flex: none;
  font-size: 25.3px;
  line-height: 30px;
  padding-top: 9px;
  white-space: nowrap;
`;
const Slider = styled.div`
  width: 195px;
  height: 24px;
  flex: none;
  margin: 11px 0 0 14px;
  display: flex;
  align-items: center;
`;
const SliderTrack = styled.span<{ $w?: number }>`
  height: 10px;
  width: ${(p) => (p.$w ? `${p.$w}px` : "auto")};
  flex: ${(p) => (p.$w ? "none" : 1)};
  border: 2px solid #272727;
  border-radius: 3px;
  background: ${(p) => (p.$w ? "#5aa0f2" : "#353535")};
`;
const SliderKnob = styled.span`
  width: 25px;
  height: 25px;
  margin: 0 -1px;
  border-radius: 5px;
  border: 2px solid #6a6a6a;
  outline: 1px solid #242424;
  background: linear-gradient(#4c4c4c, #3f3f3f);
`;
const SizeGrip = styled.span`
  margin: 34px 0 0 auto;
  width: 8px;
  height: 8px;
  background: repeating-linear-gradient(135deg, #777 0 2px, #313131 2px 4px);
`;
const EdgeMarks = styled.svg`
  display: block;
`;

export default function App() {
  return (
    <Screen>
      <GlobalStyle />
      <Defs />
      <MenuEdge />
      <Desktop>
        <BackWindow>
          <EdgeMarks width="5" height="1639">
            {[511, 554, 618, 681, 724, 810, 852, 894, 940, 1022, 1063, 1149, 1191, 1234, 1278, 1362, 1404, 1448, 1490].map((y) => (
              <path key={y} d={`M0 ${y}h5M0 ${y - 16}l5-4`} stroke="#1d1d1d" strokeWidth="2" />
            ))}
            <circle cx="0" cy="1601" r="5" />
          </EdgeMarks>
        </BackWindow>
        <Window>
          <TitleBar>
            <Lights>
              <Light />
              <Light />
              <Light />
            </Lights>
            <Title>*crime_map_borough_ward</Title>
            <span />
          </TitleBar>
          <Frame>
            <ToolRow $line={1} $height={78} $lift={3}>
              <Grip cols={2} rows={6} post={5} />
              <ToolIcon name="save" />
              <ToolSep />
              {["newLayout", "duplicate", "manager", "folder", "saveAs"].map((n) => (
                <ToolIcon key={n} name={n} />
              ))}
              <ToolSep />
              <ToolIcon name="newPage" />
              <ToolSep />
              {["print", "exportImage", "exportSvg", "exportPdf", "undo", "redo"].map((n) => (
                <ToolIcon key={n} name={n} />
              ))}
              <Grip cols={2} rows={6} pre={17} post={5} />
              {["atlas", "first", "prev"].map((n) => (
                <ToolIcon key={n} name={n} />
              ))}
              <Combo $w={168} $h={60} $dim>
                <ComboValue $top={10}>1</ComboValue>
                <ComboArrow $top={22} />
              </Combo>
              {["next", "last", "printDim", "exportAtlas", "atlasSettings"].map((n) => (
                <ToolIcon key={n} name={n} />
              ))}
            </ToolRow>
            <ToolRow $line={2} $height={76}>
              <Grip cols={2} rows={6} post={5} />
              {["zoomIn", "zoomOut", "zoomActual", "zoomFull", "refresh"].map((n) => (
                <ToolIcon key={n} name={n} />
              ))}
              <Grip cols={2} rows={6} pre={17} post={5} />
              {["lock", "unlock", "group", "ungroup", "raise", "align", "distribute", "resize"].map((n) => (
                <ToolIcon key={n} name={n} />
              ))}
            </ToolRow>
            <Body>
              <Palette>
                <PaletteHead>
                  <Grip cols={6} rows={2} />
                </PaletteHead>
                {[
                  "pan", "zoom", "select", "moveContent", "editNodes", "addMap", "add3d", "addPicture", "addLabel",
                  "addLegend", "addScale", "addNorth", "addShape", "addArrow", "addNode", "addHtml", "addTable",
                ].map((n) => (
                  <ToolIcon key={n} name={n} w={64} h={64} active={n === "select"} />
                ))}
              </Palette>
              <Work>
                <span />
                <HorizontalRuler />
                <VerticalRuler />
                <Canvas>
                  <Page>
                    <GridSvg>
                      <defs>
                        <pattern id="grid" x={-23.1} y={-23.1} width={46.2} height={46.2} patternUnits="userSpaceOnUse">
                          <path d="M20.600 23.100h5M23.100 20.600v5" stroke="#dcdcdc" strokeWidth="1" />
                        </pattern>
                      </defs>
                      <rect width="100%" height="100%" fill="url(#grid)" />
                    </GridSvg>
                    <WardMap />
                  </Page>
                </Canvas>
              </Work>
              <Splitter>
                <Grip cols={1} rows={6} />
              </Splitter>
              <Docks>
                <TabBar $h={55}>
                  <Tab $w={114} $on>
                    Items
                  </Tab>
                  <Tab $w={204}>Undo History</Tab>
                </TabBar>
                <DockTitle $h={41}>
                  Items
                  <DockControls />
                </DockTitle>
                <Tree>
                  <TreeRow $head>
                    <HeadCell $pad={4}>
                      <SmallSvg width="31" height="24" viewBox="0 0 32 24">
                        <path d="M2 5Q14-2 30 5" fill="none" stroke="#8d8d8d" strokeWidth="1.800" />
                        <path d="M1 13Q15-1 31 14 16 26 1 13z" fill="#efefef" stroke="#8a8a8a" />
                        <circle cx="15.500" cy="12" r="7" fill="#9a9a9a" stroke="#444" strokeWidth="1.500" />
                        <circle cx="15.500" cy="12" r="3" fill="#000" />
                        <circle cx="14.500" cy="9.500" r="1.500" fill="#fff" />
                      </SmallSvg>
                    </HeadCell>
                    <HeadCell $pad={10}>
                      <SmallSvg width="24" height="30" viewBox="0 0 24 30">
                        <path d="M4 14V9q0-7 8-7t8 7v5" fill="none" stroke="#d9d9d9" strokeWidth="3.600" />
                        <rect y="14" width="24" height="16" rx="2" fill="#747474" />
                      </SmallSvg>
                    </HeadCell>
                    <HeadCell $pad={6} $last>
                      Item
                    </HeadCell>
                  </TreeRow>
                  <TreeRow>
                    <BodyCell $pad={5}>
                      <Check>
                        <SmallSvg width="16" height="19" viewBox="0 0 16 19">
                          <path d="M1 10l6 7.500L15 1" fill="none" stroke="#e6e6e6" strokeWidth="3.200" />
                        </SmallSvg>
                      </Check>
                    </BodyCell>
                    <BodyCell $pad={8}>
                      <Check />
                    </BodyCell>
                    <BodyCell $pad={8}>
                      <SmallSvg width="32" height="28" viewBox="2 1 44 42" preserveAspectRatio="none">
                        <Roll />
                      </SmallSvg>
                      Map 1
                    </BodyCell>
                  </TreeRow>
                </Tree>
                <HandleRow>
                  <Grip cols={6} rows={1} />
                </HandleRow>
                <TabBar $h={51}>
                  <Tab $w={128}>Layout</Tab>
                  <Tab $w={230}>Item Properties</Tab>
                  <Tab $w={128} $on>
                    Guides
                  </Tab>
                </TabBar>
                <DockTitle $h={40}>
                  Guides
                  <DockControls />
                </DockTitle>
                <ScrollArea>
                  <ScrollContent>
                    <Group $cut>
                      <GuideList $h={212} />
                      <AddRemove />
                    </Group>
                    <GroupHeading>
                      <SmallSvg width="20" height="15" viewBox="0 0 20 15">
                        <path d="M1.500 1.500h17L10 13.500z" fill="#444" stroke="#111" strokeWidth="2" />
                      </SmallSvg>
                      Vertical Guides
                    </GroupHeading>
                    <Group>
                      <GuideList $h={238} />
                      <AddRemove />
                    </Group>
                    <WideButton>Apply to All Pages</WideButton>
                    <WideButton>Clear All Guides</WideButton>
                  </ScrollContent>
                  <ScrollBar>
                    <ScrollButton />
                    <ScrollTrack />
                    <ScrollThumb />
                    <ScrollButton $down />
                  </ScrollBar>
                </ScrollArea>
              </Docks>
            </Body>
            <Status>
              <StatusText $w={212}>x: 130.247 mm</StatusText>
              <StatusText $w={212}>y: 167.028 mm</StatusText>
              <StatusText $w={212}>page: 1</StatusText>
              <Combo $w={253} $h={52}>
                <ComboValue $top={6}>81.5%</ComboValue>
                <ComboArrow $top={16} />
              </Combo>
              <Slider>
                <SliderTrack $w={16} />
                <SliderKnob />
                <SliderTrack />
              </Slider>
              <SizeGrip />
            </Status>
          </Frame>
        </Window>
      </Desktop>
    </Screen>
  );
}
